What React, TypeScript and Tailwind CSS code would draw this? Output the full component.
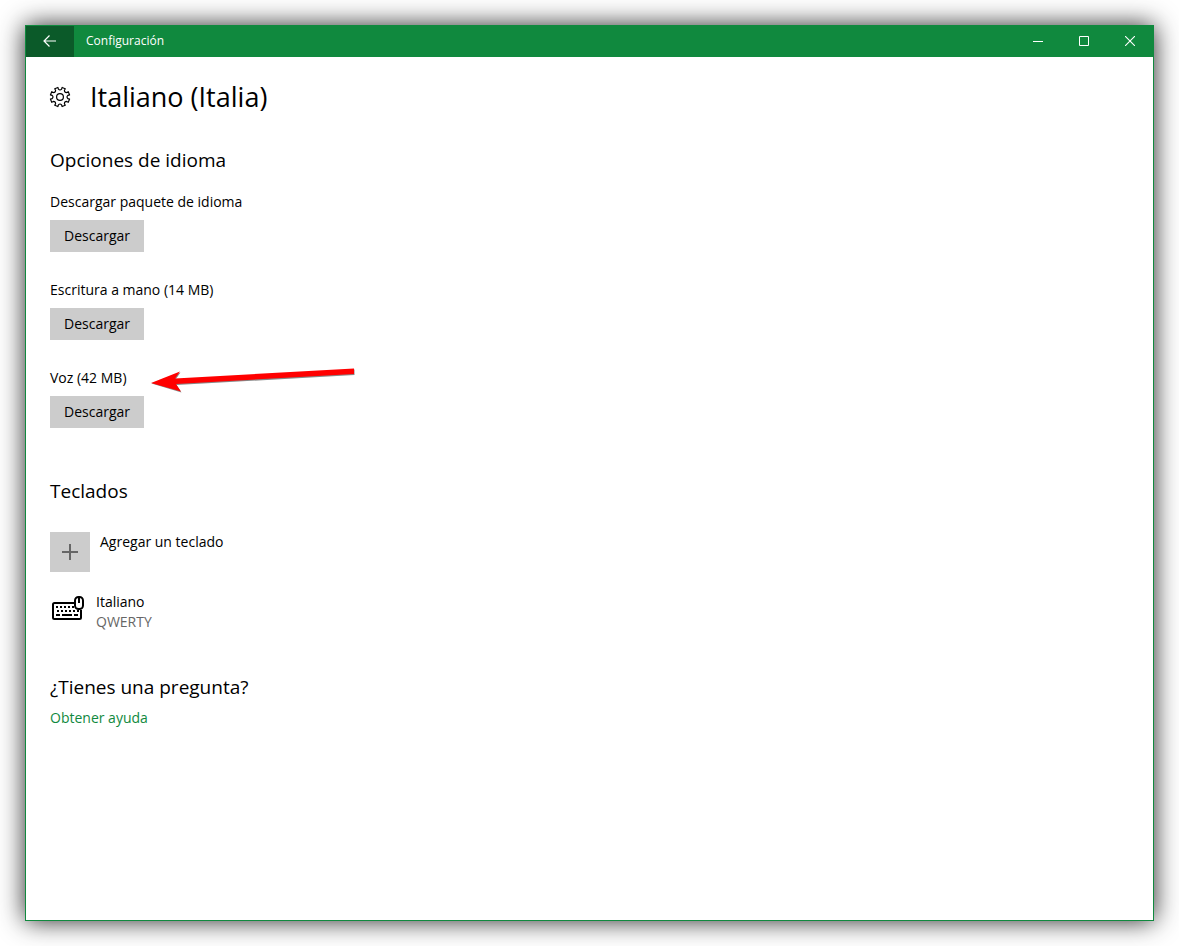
import * as React from "react";

const TEETH = 8;

function polar(r: number, deg: number) {
  const a = (deg * Math.PI) / 180;
  return `${(12 + r * Math.cos(a)).toFixed(2)} ${(12 + r * Math.sin(a)).toFixed(2)}`;
}

function gearPath() {
  let d = "";
  for (let i = 0; i < TEETH; i++) {
    const a = 22.5 + i * 45;
    d += `${i === 0 ? "M" : "L"}${polar(8, a - 11)}L${polar(9.8, a - 10)}`;
    d += `L${polar(9.8, a + 10)}L${polar(8, a + 11)}`;
    d += `Q${polar(6.2, a + 22.5)} ${polar(8, a + 34)}`;
  }
  return d + "Z";
}

function GearIcon() {
  return (
    <svg
      className="size-6 shrink-0"
      viewBox="0 0 24 24"
      fill="none"
      stroke="black"
      strokeWidth="1.2"
      strokeLinejoin="round"
      aria-hidden="true"
    >
      <path d={gearPath()} />
      <circle cx="12" cy="12" r="3.4" />
    </svg>
  );
}

function KeyboardIcon() {
  return (
    <svg
      className="h-6 w-8 shrink-0"
      viewBox="0 0 32 24"
      fill="none"
      stroke="black"
      strokeWidth="2"
      aria-hidden="true"
    >
      <path d="M22 7H2.5Q1 7 1 8.500V21.500Q1 23 2.500 23H27.500Q29 23 29 21.500V14" />
      <path d="M4 11h2m2 0h2m2 0h2m2 0h2m2 0h2" />
      <path d="M5 15h2m2 0h2m2 0h2m2 0h2m2 0h2m2 0h2" />
      <path d="M4 19h4m2 0h10m2 0h4" />
      <rect x="23" y="1" width="8" height="12" rx="3.500" fill="white" />
      <path d="M27 1v6" />
    </svg>
  );
}

function ArrowMark() {
  return (
    <svg
      className="pointer-events-none absolute left-full top-0 ml-[22px] h-7 w-[208px]"
      viewBox="0 0 208 28"
      aria-hidden="true"
    >
      <path
        d="M2 15L31 4L26 11L205 1V6.500L27 16.500L32 24Z"
        transform="translate(.5 .5)"
        fill="#888"
      />
      <path d="M2 15L31 3.500L26 10.500L205 .5V6L27 16L32 23.500Z" fill="red" />
    </svg>
  );
}

const downloads = [
  { id: "paquete", title: "Descargar paquete de idioma" },
  { id: "escritura", title: "Escritura a mano (14 MB)" },
  { id: "voz", title: "Voz (42 MB)", marked: true },
];

function TitleBar() {
  return (
    <header className="flex h-[31px] bg-[#10893e] text-white">
      <button
        aria-label="Atrás"
        className="flex w-12 items-center justify-center bg-[#0b5a29] pb-px"
      >
        <svg className="size-4" viewBox="0 0 16 16" fill="none" stroke="white" strokeWidth="1.2">
          <path d="M14 8H2.500M7.500 2.500L2 8L7.500 13.500" />
        </svg>
      </button>
      <span className="flex-1 px-3 text-xs leading-[30px]">Configuración</span>
      <button aria-label="Minimizar" className="flex w-[46px] items-center justify-center pb-px">
        <svg className="size-[10px]" viewBox="0 0 10 10" stroke="white">
          <path d="M0 5.500H10" />
        </svg>
      </button>
      <button aria-label="Maximizar" className="flex w-[46px] items-center justify-center pb-px">
        <svg className="size-[10px]" viewBox="0 0 10 10" fill="none" stroke="white">
          <path d="M.5 .5H9.500V9.500H.5Z" />
        </svg>
      </button>
      <button aria-label="Cerrar" className="flex w-[46px] items-center justify-center pb-px">
        <svg className="size-[10px]" viewBox="0 0 10 10" stroke="white" strokeWidth="1.1">
          <path d="M0 0L10 10M10 0L0 10" />
        </svg>
      </button>
    </header>
  );
}

export default function App() {
  return (
    <div className="flex min-h-screen bg-white p-[25px] font-['Open_Sans','Noto_Sans',sans-serif] text-sm leading-5 text-black">
      <div className="flex flex-1 flex-col border border-[#10893e] bg-white shadow-[0_0_24px_rgba(0,0,0,0.85)]">
        <TitleBar />
        <main className="flex flex-col px-6 pt-5">
          <div className="flex items-center gap-[18px]">
            <div className="-ml-0.5 flex">
              <GearIcon />
            </div>
            <h1 className="text-[27px] leading-10">Italiano (Italia)</h1>
          </div>

          <section className="pt-7">
            <h2 className="text-[19px] leading-[30px]">Opciones de idioma</h2>
            <ul className="flex flex-col gap-7 pt-[17px]">
              {downloads.map((item) => (
                <li key={item.id} className="flex flex-col items-start gap-2">
                  <p id={item.id} className="relative">
                    {item.title}
                    {item.marked && <ArrowMark />}
                  </p>
                  <button
                    aria-describedby={item.id}
                    className="h-8 bg-[#cccccc] px-[14px]"
                  >
                    Descargar
                  </button>
                </li>
              ))}
            </ul>
          </section>

          <section className="pt-12">
            <h2 className="text-[19px] leading-[30px]">Teclados</h2>
            <button className="mt-[26px] flex items-start gap-[10px] text-left">
              <span className="flex size-10 items-center justify-center bg-[#cccccc]">
                <svg className="size-4" viewBox="0 0 16 16" stroke="#666" strokeWidth="2">
                  <path d="M0 8H16M8 0V16" />
                </svg>
              </span>
              <span>Agregar un teclado</span>
            </button>
            <div className="flex gap-3 pl-0.5 pt-5">
              <div className="flex pt-1">
                <KeyboardIcon />
              </div>
              <div>
                <p>Italiano</p>
                <p className="text-[#666666]">QWERTY</p>
              </div>
            </div>
          </section>

          <section className="pt-10">
            <h2 className="text-[19px] leading-[30px]">¿Tienes una pregunta?</h2>
            <a href="#ayuda" className="mt-[6px] inline-block text-[#10893e]">
              Obtener ayuda
            </a>
          </section>
        </main>
      </div>
    </div>
  );
}
